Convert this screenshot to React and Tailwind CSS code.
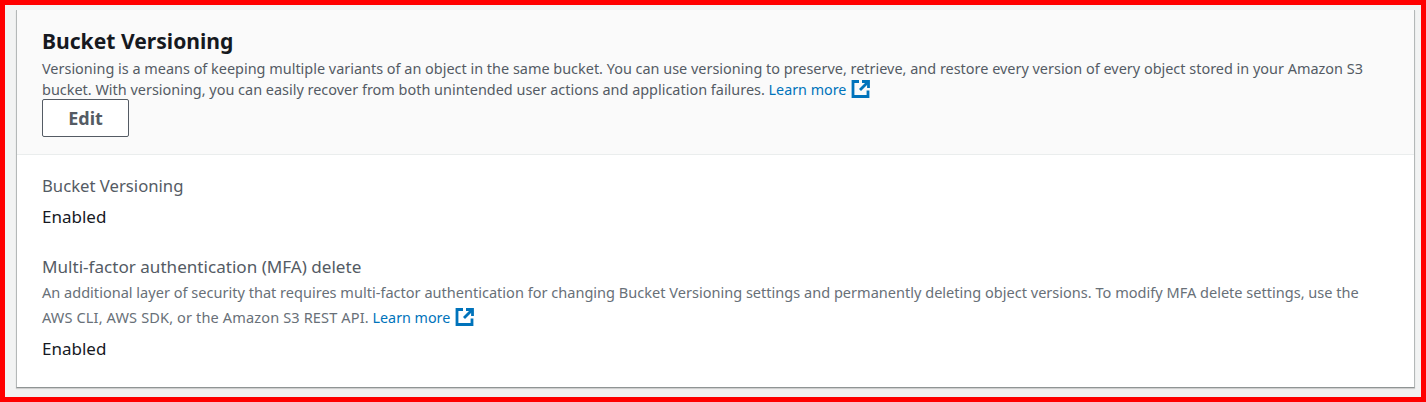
function ExternalIcon() {
  return (
    <svg width="20" height="20" viewBox="0 0 20 20" fill="none" stroke="#0073bb" strokeWidth="2.8" className="inline-block ml-[5px] align-[-4px]">
      <path d="M8 2.5H2v15h15v-6" />
      <path d="M11 2.5h6.5V9" />
      <path d="M17 3l-8 8" />
    </svg>
  );
}

function LearnMore() {
  return (
    <a href="#" className="text-[14.3px] text-[#0073bb]">
      Learn more
      <ExternalIcon />
    </a>
  );
}

export default function App() {
  return (
    <div className="w-[1426px] h-[402px] overflow-hidden border-[5px] border-[#ff0000] bg-[#f2f3f3] px-[11px] pt-[5px] font-['Noto_Sans',sans-serif]">
      <div className="w-[1399px] h-[378px] bg-white border-l border-r border-b border-[#b4b8b8] border-b-[#8f9494] shadow-[0_1px_1px_rgba(0,0,0,0.15)]">
        <div className="h-[145px] bg-[#fafafa] border-b border-[#eaeded] px-[25px] pt-[18px]">
          <h2 className="text-[21.1px] leading-[26px] font-bold text-[#16191f]">Bucket Versioning</h2>
          <p className="text-[14.45px] leading-[20px] mt-[5px] text-[#545b64]">
            Versioning is a means of keeping multiple variants of an object in the same bucket. You can use versioning to preserve, retrieve, and restore every version of every object stored in your Amazon S3 bucket. With versioning, you can easily recover from both unintended user actions and application failures. <LearnMore />
          </p>
          <button className="block w-[87px] h-[38px] mt-[-1px] bg-white border border-[#545b64] rounded-[2px] text-[18px] font-bold text-[#545b64]">Edit</button>
        </div>
        <div className="px-[25px] pt-[20px]">
          <div className="text-[16.7px] leading-[22px] text-[#545b64]">Bucket Versioning</div>
          <div className="text-[17px] leading-[22px] mt-[9px] text-[#16191f]">Enabled</div>
          <div className="text-[17.1px] leading-[22px] mt-[28px] text-[#545b64]">Multi-factor authentication (MFA) delete</div>
          <p className="max-w-[1330px] text-[14.55px] leading-[25px] mt-[2px] text-[#687078]">
            An additional layer of security that requires multi-factor authentication for changing Bucket Versioning settings and permanently deleting object versions. To modify MFA delete settings, use the <span className="tracking-[0.13px]">AWS CLI, AWS SDK, or the Amazon S3 REST API.</span> <LearnMore />
          </p>
          <div className="text-[17px] leading-[22px] mt-[8px] text-[#16191f]">Enabled</div>
        </div>
      </div>
    </div>
  );
}
